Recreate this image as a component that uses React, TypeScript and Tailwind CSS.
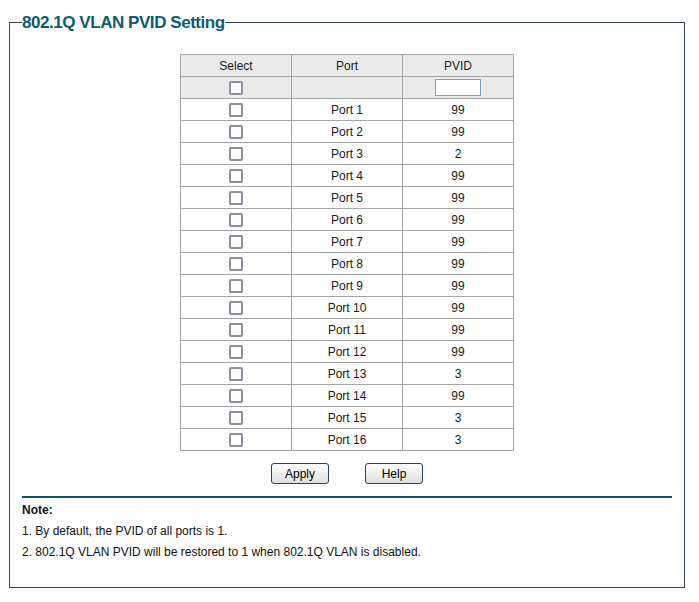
import React from 'react';

const ports = [
  { name: 'Port 1', pvid: '99' },
  { name: 'Port 2', pvid: '99' },
  { name: 'Port 3', pvid: '2' },
  { name: 'Port 4', pvid: '99' },
  { name: 'Port 5', pvid: '99' },
  { name: 'Port 6', pvid: '99' },
  { name: 'Port 7', pvid: '99' },
  { name: 'Port 8', pvid: '99' },
  { name: 'Port 9', pvid: '99' },
  { name: 'Port 10', pvid: '99' },
  { name: 'Port 11', pvid: '99' },
  { name: 'Port 12', pvid: '99' },
  { name: 'Port 13', pvid: '3' },
  { name: 'Port 14', pvid: '99' },
  { name: 'Port 15', pvid: '3' },
  { name: 'Port 16', pvid: '3' },
];

const cellStyle = "border border-[#a6a6a6] h-[22px] p-0 text-center align-middle";
const boxStyle = "appearance-none block mx-auto w-[14px] h-[14px] border-2 border-[#8e8e9c] rounded-[2px] bg-white";
const btnStyle = "w-[58px] h-[21px] border border-[#24425e] rounded-[3px] bg-gradient-to-b from-white to-[#dedede] text-[12px] text-black leading-none";

const App: React.FC = () => {
  return (
    <div className="w-[699px] h-[602px] bg-white pt-[12px] font-['Liberation_Sans',Arial,sans-serif] text-[12px] text-[#1a1a1a]">
      <fieldset className="ml-[9px] w-[676px] border border-[#34434c] pb-[24px]">
        <legend className="ml-[12px] p-0 text-[17px] leading-[21px] tracking-[-0.45px] font-bold text-[#0b5c6e]">802.1Q VLAN PVID Setting</legend>

        <table className="mx-auto mt-[21px] w-[334px] border-collapse table-fixed">
          <thead>
            <tr className="bg-[#ebebeb]">
              <th className={cellStyle + " font-normal"}>Select</th>
              <th className={cellStyle + " font-normal"}>Port</th>
              <th className={cellStyle + " font-normal"}>PVID</th>
            </tr>
            <tr className="bg-[#ebebeb]">
              <td className={cellStyle}><input type="checkbox" className={boxStyle} /></td>
              <td className={cellStyle}></td>
              <td className={cellStyle}>
                <input type="text" className="block mx-auto w-[46px] h-[17px] border border-[#7f9fc0] bg-white outline-none" />
              </td>
            </tr>
          </thead>
          <tbody>
            {ports.map((p) => (
              <tr key={p.name}>
                <td className={cellStyle}><input type="checkbox" className={boxStyle} /></td>
                <td className={cellStyle}>{p.name}</td>
                <td className={cellStyle}>{p.pvid}</td>
              </tr>
            ))}
          </tbody>
        </table>

        <div className="flex justify-center gap-[36px] mt-[12px]">
          <button className={btnStyle}>Apply</button>
          <button className={btnStyle}>Help</button>
        </div>

        <div className="mx-[12px] mt-[12px] h-[2px] bg-[#0f5562]"></div>

        <div className="mx-[12px] mt-[2px] leading-[21px] text-[#111]">
          <div className="font-bold">Note:</div>
          <div>1. By default, the PVID of all ports is 1.</div>
          <div>2. 802.1Q VLAN PVID will be restored to 1 when 802.1Q VLAN is disabled.</div>
        </div>
      </fieldset>
    </div>
  );
};

export default App;
